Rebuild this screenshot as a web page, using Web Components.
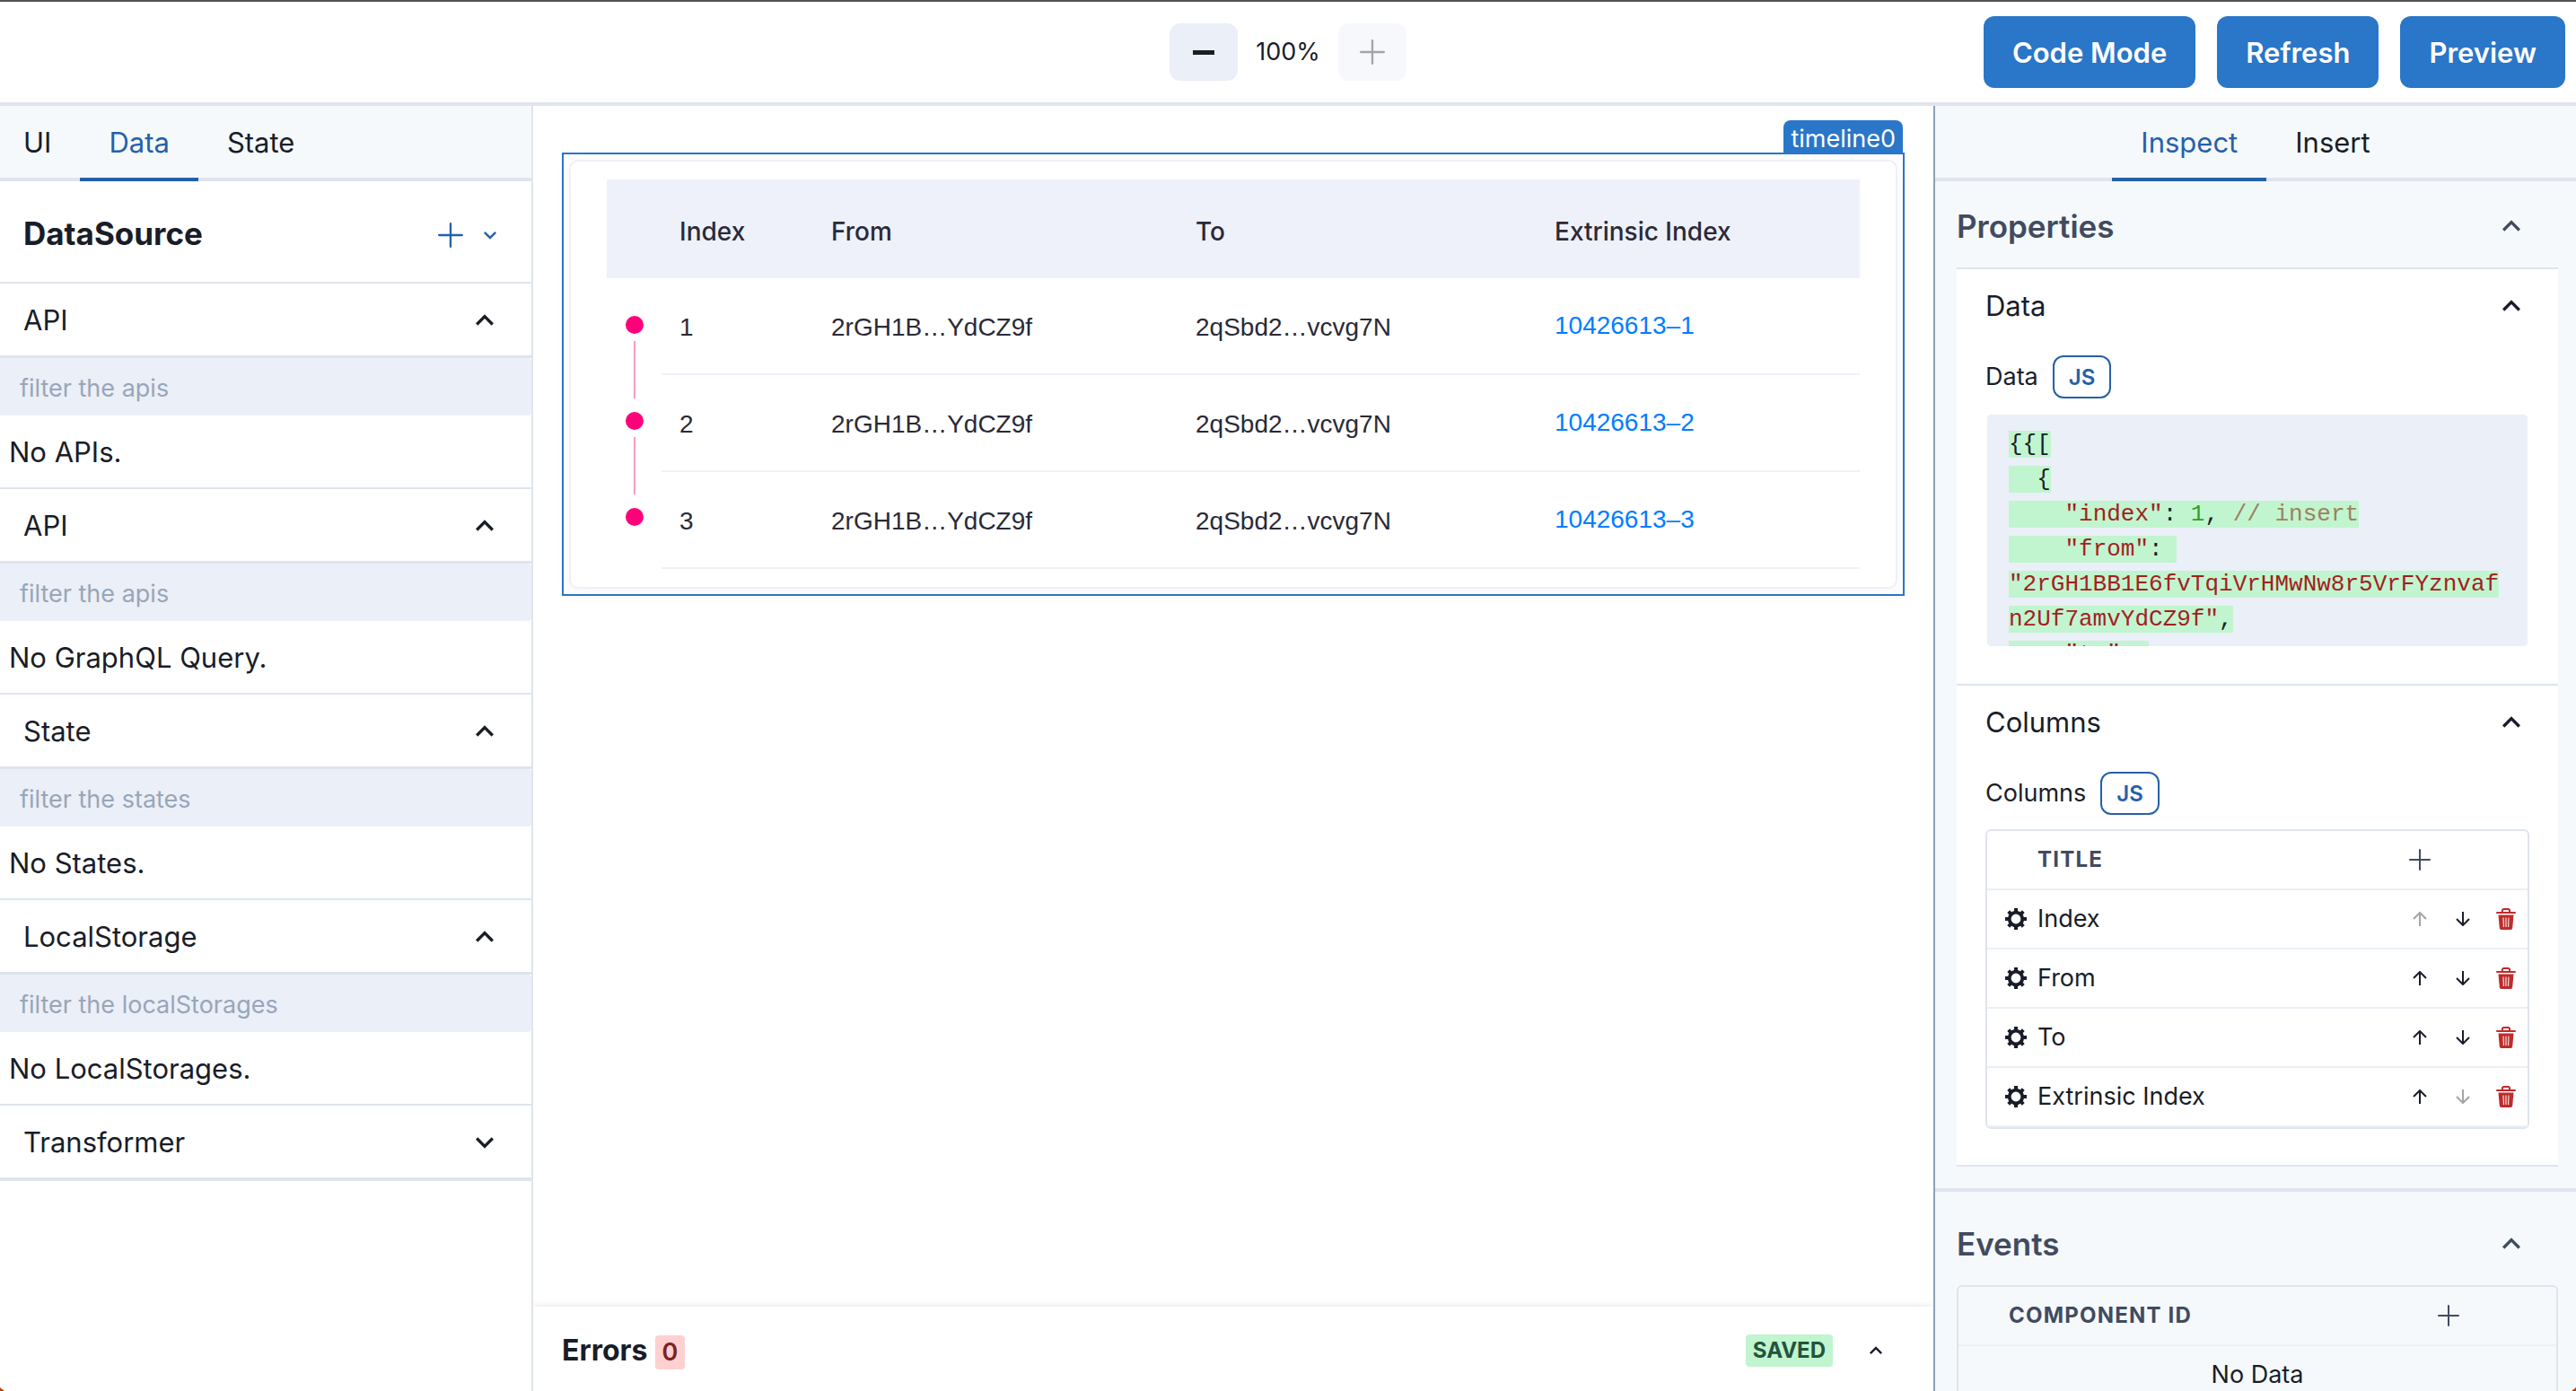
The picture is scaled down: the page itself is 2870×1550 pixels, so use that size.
<!DOCTYPE html>
<html lang="en">
<head>
<meta charset="utf-8">
<title>Sunmao Editor</title>
<style>
  html, body {
    margin: 0;
    height: 100%;
    overflow: hidden;
  }
  body {
    font-family: Inter, "Liberation Sans", sans-serif;
    font-size: 31px;
    line-height: 48px;
    color: #191d28;
    background: #fff;
    --line: #dfe4ee;
    --row-line: #ebf0f6;
    --panel: #f5f9fc;
    --field: #ebeff7;
    --blue: #2a76c8;
    --blue-dark: #2560a9;
    --heading: #414b60;
  }
</style>
</head>
<body>
<editor-app></editor-app>

<script>
// shared by every component
const base = `
  *, *::before, *::after { box-sizing: border-box; }
  button { font: inherit; color: inherit; background: none; border: 0; margin: 0; padding: 0; cursor: pointer; }
  button:disabled { opacity: .4; cursor: not-allowed; }
  h1, h2, h3, p { margin: 0; font: inherit; }
  svg { display: block; fill: currentColor; }
`;

const icons = {
  up: ['0 0 24 24', '<path d="M12 8l-6 6 1.41 1.41L12 10.83l4.59 4.58L18 14z"/>'],
  down: ['0 0 24 24', '<path d="M16.59 8.59L12 13.17 7.41 8.59 6 10l6 6 6-6z"/>'],
  plus: ['0 0 24 24', '<path d="M0 12a1 1 0 0 1 1-1h10V1a1 1 0 1 1 2 0v10h10a1 1 0 1 1 0 2H13v10a1 1 0 1 1-2 0V13H1a1 1 0 0 1-1-1z"/>'],
  minus: ['0 0 24 24', '<rect x="0" y="10" width="24" height="5"/>'],
  arrowUp: ['0 0 16 16', '<path d="M8 16V1M1 8l7-7 7 7" fill="none" stroke="currentColor" stroke-width="2"/>'],
  arrowDown: ['0 0 16 16', '<path d="M8 0v15M1 8l7 7 7-7" fill="none" stroke="currentColor" stroke-width="2"/>'],
  gear: ['0 0 24 24', '<circle cx="12" cy="12" r="7.300" fill="none" stroke="currentColor" stroke-width="3.800"/><path d="M12 0v4M12 20v4M0 12h4M20 12h4M3.700 3.700l2.600 2.600M17.700 17.700l2.600 2.600M3.700 20.300l2.600-2.600M17.700 6.300l2.600-2.600" fill="none" stroke="currentColor" stroke-width="4"/>'],
  trash: ['0 0 24 24', '<path fill-rule="evenodd" d="M2 4h5V2.500A2.500 2.500 0 0 1 9.500 0h5A2.500 2.500 0 0 1 17 2.500V4h5a1 1 0 0 1 0 2H2a1 1 0 0 1 0-2zm7 0h6V2.500a.5.500 0 0 0-.5-.5h-5a.5.500 0 0 0-.5.500zM3.500 7.500h17l-1.300 14.700A2 2 0 0 1 17.200 24H6.800a2 2 0 0 1-2-1.800zM8.500 10.500l.4 10.500h1L9.500 10.500zm3 0V21h1V10.500zm3 0L14.100 21h1l.4-10.500z"/>'],
};

function icon(name, size) {
  const [box, body] = icons[name];
  return `<svg viewBox="${box}" width="${size}" height="${size}" aria-hidden="true">${body}</svg>`;
}

function define(name, render) {
  customElements.define(name, class extends HTMLElement {
    connectedCallback() {
      if (this.shadowRoot) return;
      const root = this.attachShadow({ mode: 'open' });
      root.innerHTML = `<style>${base}</style>` + render(this);
    }
  });
}

define('editor-header', () => `
  <style>
    :host {
      display: grid;
      grid-template-columns: 1fr auto 1fr;
      align-items: center;
      height: 118px;
      padding-right: 12px;
      border-top: 2px solid #555;
      border-bottom: 4px solid var(--line);
    }
    .zoom { grid-column: 2; display: flex; align-items: center; gap: 20px; font-size: 27px; padding-left: 12px; }
    .zoom button { display: grid; place-items: center; width: 76px; height: 64px; border-radius: 12px; background: var(--field); }
    .zoom button:disabled { opacity: .4; color: #191d28; }
    .actions { display: flex; justify-content: flex-end; gap: 24px; }
    .actions button { height: 80px; padding: 2px 32px 0; border-radius: 12px; background: var(--blue); color: #fff; font-weight: 600; }
  </style>
  <div class="zoom">
    <button aria-label="Zoom out">${icon('minus', 24)}</button>
    <span>100%</span>
    <button aria-label="Zoom in" disabled>${icon('plus', 28)}</button>
  </div>
  <div class="actions">
    <button>Code Mode</button>
    <button>Refresh</button>
    <button>Preview</button>
  </div>
`);

define('tab-bar', el => {
  const tabs = el.getAttribute('tabs').split(',');
  const active = el.getAttribute('active');
  return `
  <style>
    :host { display: block; flex: none; background: var(--panel); border-bottom: 4px solid var(--line); }
    div { display: flex; margin-bottom: -4px; }
    :host([centered]) div { justify-content: center; }
    button { height: 84px; padding: 2px 32px 0; border-bottom: 4px solid transparent; }
    :host(:not([centered])) button:first-child { padding-left: 26px; }
    button[aria-selected="true"] { color: var(--blue-dark); border-color: var(--blue-dark); }
  </style>
  <div role="tablist">
    ${tabs.map(t => `<button role="tab" aria-selected="${t === active}">${t}</button>`).join('')}
  </div>`;
});

// collapsible group in the data panel
define('source-group', el => {
  const open = el.hasAttribute('filter');
  return `
  <style>
    :host { display: block; border-top: 2px solid var(--line); }
    .head { display: flex; align-items: center; justify-content: space-between; width: 100%; height: 80px; padding: 2px 32px 0 26px; text-align: left; }
    .body { border-top: 3px solid var(--line); }
    input { display: block; width: 100%; height: 64px; border: 0; border-radius: 0 4px 4px 0; padding: 2px 22px 0; background: var(--field); font: inherit; font-size: 27px; color: inherit; }
    input::placeholder { color: #97a6ba; opacity: 1; }
    p { padding: 17px 10px 15px; }
  </style>
  <button class="head" aria-expanded="${open}"><span>${el.getAttribute('label')}</span>${icon(open ? 'up' : 'down', 40)}</button>
  ${open ? `<div class="body">
    <input type="text" aria-label="${el.getAttribute('filter')}" placeholder="${el.getAttribute('filter')}">
    <p><slot></slot></p>
  </div>` : ''}`;
});

define('data-panel', () => `
  <style>
    :host { display: flex; flex-direction: column; border-right: 2px solid var(--line); background: #fff; }
    .title { display: flex; align-items: center; justify-content: space-between; height: 112px; padding: 8px 32px 0 26px; }
    h2 { font-size: 35px; font-weight: 700; padding-bottom: 4px; }
    .title button { display: flex; align-items: center; gap: 16px; color: var(--blue-dark); }
    .groups { border-bottom: 4px solid var(--line); }
  </style>
  <tab-bar tabs="UI,Data,State" active="Data"></tab-bar>
  <div class="title">
    <h2>DataSource</h2>
    <button aria-label="Add data source">${icon('plus', 28)}${icon('down', 28)}</button>
  </div>
  <div class="groups">
    <source-group label="API" filter="filter the apis">No APIs.</source-group>
    <source-group label="API" filter="filter the apis">No GraphQL Query.</source-group>
    <source-group label="State" filter="filter the states">No States.</source-group>
    <source-group label="LocalStorage" filter="filter the localStorages">No LocalStorages.</source-group>
    <source-group label="Transformer"></source-group>
  </div>
`);

define('timeline-table', () => {
  const rows = [1, 2, 3];
  return `
  <style>
    :host {
      display: block;
      padding: 20px 40px;
      border: 2px solid #eef0f9;
      border-radius: 10px;
      background: #fff;
      box-shadow: 0 6px 24px rgba(0, 0, 0, .04);
      font-family: "Liberation Sans", Arial, sans-serif;
      font-size: 28px;
      line-height: 44px;
      color: #2a2a38;
    }
    table { width: 100%; border-collapse: separate; border-spacing: 0; table-layout: fixed; }
    th, td { height: 108px; padding: 4px 20px 0; text-align: left; font-weight: 400; border-bottom: 2px solid #eff1f9; }
    th { height: 110px; padding-top: 8px; background: #eef0fa; font-family: Inter, sans-serif; font-weight: 500; border-color: #edf1f8; }
    .dots { width: 61px; padding: 0; border: 0; vertical-align: top; }
    .rail { display: flex; flex-direction: column; align-items: center; padding-top: 42px; }
    .rail b { width: 20px; height: 20px; border-radius: 50%; background: #ff007a; }
    .rail i { width: 2px; height: 64px; margin: 8px 0 15px; background: #f99cc4; }
    .index { width: 169px; }
    .from { width: 406px; }
    .to { width: 400px; }
    td.link { padding-top: 0; }
    a { color: #007dff; text-decoration: none; }
  </style>
  <table>
    <thead>
      <tr>
        <th style="width: 61px"></th>
        <th class="index">Index</th>
        <th class="from">From</th>
        <th class="to">To</th>
        <th>Extrinsic Index</th>
      </tr>
    </thead>
    <tbody>
      ${rows.map(n => `<tr>
        ${n === 1 ? '<td class="dots" rowspan="3"><div class="rail"><b></b><i></i><b></b><i></i><b></b></div></td>' : ''}
        <td>${n}</td>
        <td>2rGH1B…YdCZ9f</td>
        <td>2qSbd2…vcvg7N</td>
        <td class="link"><a href="#extrinsic-${n}">10426613–${n}</a></td>
      </tr>`).join('')}
    </tbody>
  </table>`;
});

define('selection-frame', el => `
  <style>
    :host { display: block; position: relative; padding: 6px; border: 2px solid var(--blue); }
    .tag {
      position: absolute;
      right: 0;
      bottom: 100%;
      padding: 0 8px;
      height: 38px;
      border-radius: 8px 8px 0 0;
      background: var(--blue);
      color: #fff;
      font-size: 27px;
      line-height: 42px;
    }
  </style>
  <span class="tag">${el.getAttribute('name')}</span>
  <slot></slot>
`);

define('error-bar', () => `
  <style>
    :host { display: flex; align-items: center; height: 94px; flex: none; padding: 4px 50px 0 32px; background: #fff; box-shadow: 0 0 8px rgba(0, 0, 0, .12); clip-path: inset(-8px 0 0 0); }
    h2 { font-size: 32px; font-weight: 700; }
    .count, .saved { border-radius: 4px; padding: 0 8px; font-weight: 700; font-size: 24px; }
    .count { margin: 4px 0 0 8px; line-height: 38px; background: #fed0d0; color: #7b2222; font-weight: 600; font-size: 27px; }
    .saved { margin-left: auto; line-height: 36px; background: #c1f5cf; color: #22543d; }
    button { margin-left: 34px; }
  </style>
  <h2>Errors</h2><span class="count">0</span>
  <span class="saved">SAVED</span>
  <button aria-label="Toggle errors">${icon('up', 28)}</button>
`);

define('editor-canvas', () => `
  <style>
    :host { display: flex; flex-direction: column; min-width: 0; }
    .stage { flex: 1; padding: 52px 32px 0; }
  </style>
  <div class="stage">
    <selection-frame name="timeline0"><timeline-table></timeline-table></selection-frame>
  </div>
  <error-bar></error-bar>
`);

define('code-field', () => `
  <style>
    :host {
      display: block;
      height: 262px;
      overflow: hidden;
      border: 2px solid #fff;
      border-radius: 6px;
      padding: 14px 24px 0;
      background: var(--field);
      background-clip: padding-box;
      font-family: "Liberation Mono", monospace;
      font-size: 26px;
      line-height: 39px;
    }
    pre { margin: 0; font: inherit; }
    mark { background: #c1f5cf; color: inherit; }
    .s { color: #a31f1f; }
    .n { color: #2ca02c; }
    .c { color: #a08060; }
  </style>
  <pre><mark>{{[
  {
    <span class="s">"index"</span>: <span class="n">1</span>, <span class="c">// insert</span>
    <span class="s">"from"</span>: 
<span class="s">"2rGH1BB1E6fvTqiVrHMwNw8r5VrFYznvaf
n2Uf7amvYdCZ9f"</span>,
    <span class="s">"to"</span>: </mark></pre>
`);

define('inspect-section', el => `
  <style>
    :host { display: block; }
    .head { display: flex; align-items: center; justify-content: space-between; width: 100%; height: 96px; padding: 4px 32px 0 0; color: var(--heading); font-size: 35px; font-weight: 600; text-align: left; }
  </style>
  <button class="head" aria-expanded="true"><span>${el.getAttribute('label')}</span>${icon('up', 40)}</button>
  <slot></slot>
`);

define('property-group', el => `
  <style>
    :host { display: block; background: #fff; border-top: 2px solid var(--line); padding: 0 32px 40px; }
    .head { display: flex; align-items: center; justify-content: space-between; width: 100%; height: 80px; padding-top: 2px; text-align: left; }
    .field { display: flex; align-items: center; gap: 16px; margin: 16px 0; font-size: 27px; }
    .js { height: 48px; padding: 2px 16px 0; border: 2px solid var(--blue-dark); border-radius: 12px; color: var(--blue-dark); font-size: 24px; line-height: 24px; font-weight: 600; }
  </style>
  <button class="head" aria-expanded="true"><span>${el.getAttribute('label')}</span>${icon('up', 40)}</button>
  <div class="field"><span>${el.getAttribute('label')}</span><button class="js">JS</button></div>
  <slot></slot>
`);

const tableStyle = `
  :host { display: block; border: 2px solid var(--line); border-radius: 6px; font-size: 27px; line-height: 40px; }
  table { width: 100%; border-collapse: separate; border-spacing: 0; table-layout: fixed; }
  th, td { height: 66px; padding: 0; border-bottom: 2px solid var(--row-line); text-align: left; }
  th { color: var(--heading); font-size: 24px; font-weight: 700; letter-spacing: .05em; text-transform: uppercase; }
  th.act { width: 240px; }
  th.act button { display: block; margin: 0 auto; }
`;

define('columns-table', () => {
  const cols = ['Index', 'From', 'To', 'Extrinsic Index'];
  return `
  <style>
    ${tableStyle}
    .set { width: 56px; }
    td.set { padding-left: 20px; }
    td.set button { display: block; }
    .moves { display: flex; justify-content: flex-end; }
    .moves button { display: grid; place-items: center; width: 48px; height: 48px; }
    .moves .del { color: #c02b2b; }
  </style>
  <table>
    <thead><tr><th class="set"></th><th>Title</th><th class="act"><button aria-label="Add column">${icon('plus', 24)}</button></th></tr></thead>
    <tbody>
      ${cols.map((c, i) => `<tr>
        <td class="set"><button aria-label="Settings">${icon('gear', 24)}</button></td>
        <td>${c}</td>
        <td><div class="moves">
          <button aria-label="Move up" ${i === 0 ? 'disabled' : ''}>${icon('arrowUp', 16)}</button>
          <button aria-label="Move down" ${i === cols.length - 1 ? 'disabled' : ''}>${icon('arrowDown', 16)}</button>
          <button aria-label="Remove" class="del">${icon('trash', 24)}</button>
        </div></td>
      </tr>`).join('')}
    </tbody>
  </table>`;
});

define('events-table', () => `
  <style>
    ${tableStyle}
    th:first-child { padding-left: 56px; }
    td { text-align: center; }
  </style>
  <table>
    <thead><tr><th>Component ID</th><th class="act"><button aria-label="Add event">${icon('plus', 24)}</button></th></tr></thead>
    <tbody><tr><td colspan="2">No Data</td></tr></tbody>
  </table>
`);

define('inspect-panel', () => `
  <style>
    :host { display: flex; flex-direction: column; overflow: hidden; border-left: 2px solid #8ea0b8; background: var(--panel); }
    inspect-section { padding: 0 20px 0 24px; flex: none; }
    .props { padding-bottom: 24px; border-bottom: 4px solid var(--line); margin-bottom: 8px; }
    .card { border-bottom: 2px solid var(--line); }
  </style>
  <tab-bar tabs="Inspect,Insert" active="Inspect" centered></tab-bar>
  <inspect-section class="props" label="Properties">
    <div class="card">
      <property-group label="Data"><code-field></code-field></property-group>
      <property-group label="Columns"><columns-table></columns-table></property-group>
    </div>
  </inspect-section>
  <inspect-section label="Events">
    <events-table></events-table>
  </inspect-section>
`);

define('editor-app', () => `
  <style>
    :host { display: grid; grid-template-rows: auto 1fr; height: 100vh; position: relative; overflow: hidden; }
    main { display: grid; grid-template-columns: 594px minmax(0, 1fr) 716px; min-height: 0; }
    /* desktop showing behind the rounded window corners */
    :host::before, :host::after { content: ""; position: absolute; bottom: 0; width: 5px; height: 4px; background: #b5480f; z-index: 1; }
    :host::before { left: 0; clip-path: polygon(0 0, 100% 100%, 0 100%); }
    :host::after { right: 0; clip-path: polygon(100% 0, 100% 100%, 0 100%); }
  </style>
  <editor-header></editor-header>
  <main>
    <data-panel></data-panel>
    <editor-canvas></editor-canvas>
    <inspect-panel></inspect-panel>
  </main>
`);
</script>
</body>
</html>
